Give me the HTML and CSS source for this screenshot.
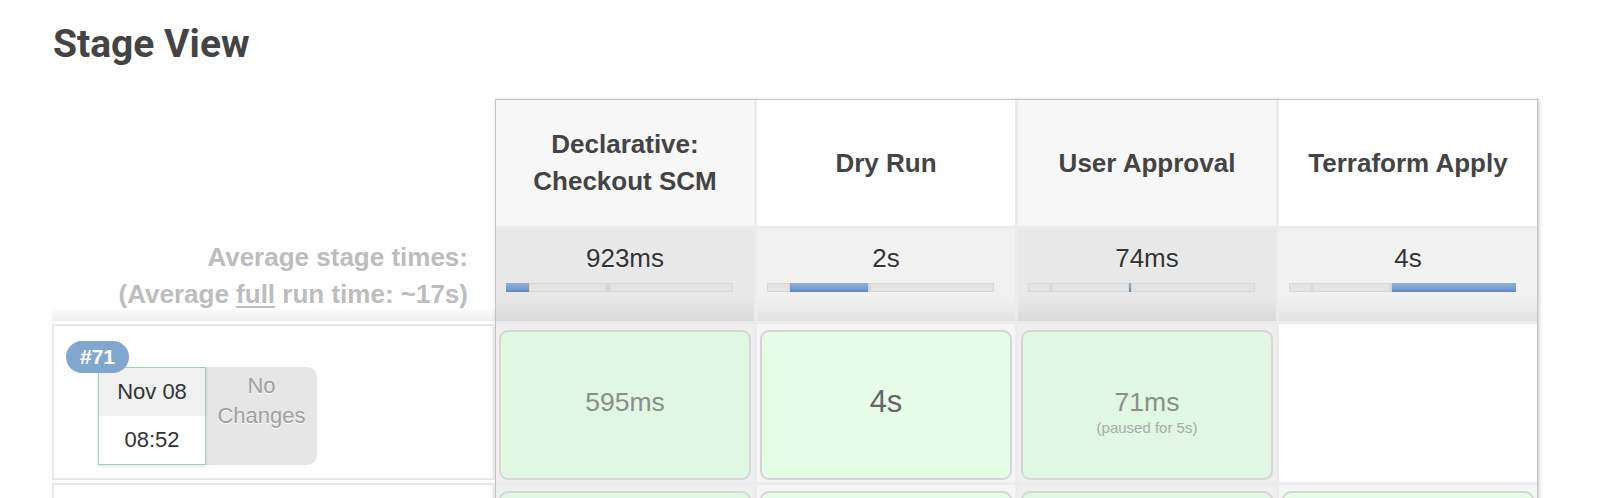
FILE: index.html
```html
<!DOCTYPE html>
<html>
<head>
<meta charset="utf-8">
<link rel="stylesheet" href="styles.css">
</head>
<body>
<div class="page">
  <h2 class="title">Stage View</h2>
  <div class="stage-view">
    <div class="history">
      <div class="history-head"></div>
      <div class="avg-label">Average stage times:<br>(Average <u>full</u> run time: ~17s)</div>
      <div class="build-row">
        <span class="badge">#71</span>
        <div class="build">
          <div class="date">
            <div class="day">Nov 08</div>
            <div class="time">08:52</div>
          </div>
          <div class="changes">No<br>Changes</div>
        </div>
      </div>
      <div class="build-row"></div>
    </div>
    <div class="table-box">
      <div class="grid">
        <div class="head odd"><span>Declarative:<br>Checkout SCM</span></div>
        <div class="head even"><span>Dry Run</span></div>
        <div class="head odd"><span>User Approval</span></div>
        <div class="head even"><span>Terraform Apply</span></div>

        <div class="avg odd">
          <div class="avg-time">923ms</div>
          <div class="bar"><i class="seg on" style="width:10%"></i><i class="seg" style="width:34.6%"></i><i class="seg" style="width:0.5%"></i><i class="seg" style="width:54.9%"></i></div>
        </div>
        <div class="avg even">
          <div class="avg-time">2s</div>
          <div class="bar"><i class="seg" style="width:10%"></i><i class="seg on" style="width:34.6%"></i><i class="seg" style="width:0.5%"></i><i class="seg" style="width:54.9%"></i></div>
        </div>
        <div class="avg odd">
          <div class="avg-time">74ms</div>
          <div class="bar"><i class="seg" style="width:10%"></i><i class="seg" style="width:34.6%"></i><i class="seg on" style="width:0.5%"></i><i class="seg" style="width:54.9%"></i></div>
        </div>
        <div class="avg even">
          <div class="avg-time">4s</div>
          <div class="bar"><i class="seg" style="width:10%"></i><i class="seg" style="width:34.6%"></i><i class="seg" style="width:0.5%"></i><i class="seg on" style="width:54.9%"></i></div>
        </div>

        <div class="cell odd"><div class="box dark"><div class="dur">595ms</div></div></div>
        <div class="cell even"><div class="box light"><div class="dur big">4s</div></div></div>
        <div class="cell odd"><div class="box dark"><div class="dur">71ms</div><div class="paused">(paused for 5s)</div></div></div>
        <div class="cell empty"></div>

        <div class="cell odd"><div class="box dark"></div></div>
        <div class="cell even"><div class="box light"></div></div>
        <div class="cell odd"><div class="box dark"></div></div>
        <div class="cell even"><div class="box light"></div></div>
      </div>
    </div>
  </div>
</div>
</body>
</html>
```

FILE: styles.css
```css
html, body {
  margin: 0;
  padding: 0;
  overflow: hidden;
  background: #fff;
}

body {
  font-family: "Liberation Sans", Arial, sans-serif;
  color: #333;
}

.page {
  padding: 20px 0 0 52px;
}

.title {
  font-family: Roboto, "Liberation Sans", sans-serif;
  font-weight: 700;
  font-size: 39px;
  line-height: 48px;
  color: #444;
  margin: 0 0 31px 1px;
}

.stage-view {
  display: flex;
  align-items: flex-start;
}

/* left history column */
.history {
  width: 443px;
  flex: none;
  display: flex;
  flex-direction: column;
}

.history-head {
  height: 130px;
}

.avg-label {
  height: 92px;
  box-sizing: border-box;
  padding: 10px 27px 0 0;
  text-align: right;
  font-weight: 700;
  font-size: 26px;
  line-height: 37px;
  color: #bdbdbd;
  background: linear-gradient(to bottom, #fff 0, #fff 85%, #ececec 100%);
}

.avg-label u {
  text-decoration-thickness: 2px;
  text-underline-offset: 3px;
}

.build-row {
  position: relative;
  height: 156px;
  box-sizing: border-box;
  border: 2px solid #e8e8e8;
  margin-top: 3px;
}

.badge {
  position: absolute;
  left: 12px;
  top: 15px;
  width: 63px;
  height: 32px;
  border-radius: 16px;
  background: #82a7cf;
  color: #fff;
  font-weight: 700;
  font-size: 21px;
  line-height: 32px;
  text-align: center;
  z-index: 2;
}

.build {
  display: flex;
  margin: 41px 0 0 44px;
}

.date {
  width: 108px;
  height: 98px;
  box-sizing: border-box;
  border: 1px solid #a2d1b2;
  box-shadow: 0 1px 3px rgba(0, 0, 0, 0.14);
  font-size: 22px;
  text-align: center;
  color: #333;
  position: relative;
  z-index: 1;
}

.day {
  height: 48px;
  line-height: 48px;
  background: #f0f0f0;
}

.time {
  height: 48px;
  line-height: 48px;
  background: #fff;
}

.changes {
  width: 111px;
  height: 98px;
  box-sizing: border-box;
  padding-top: 4px;
  background: #e6e6e6;
  border-radius: 0 10px 10px 0;
  font-size: 22px;
  line-height: 30px;
  text-align: center;
  color: #a0a0a0;
  text-shadow: 0 1px 0 #fff;
}

/* stage table */
.table-box {
  width: 1043px;
  flex: none;
  box-sizing: border-box;
  border: 1px solid #c4c4c4;
  box-shadow: 1px 1px 4px rgba(0, 0, 0, 0.22);
  background: #fff;
}

.grid {
  display: grid;
  grid-template-columns: repeat(4, 1fr);
  grid-template-rows: 126px 92px 158px 158px;
  gap: 3px;
  background: #ececec;
}

.head {
  display: flex;
  align-items: center;
  justify-content: center;
  text-align: center;
  font-weight: 700;
  font-size: 26px;
  line-height: 37px;
  color: #444;
}

.head.odd { background: #f7f7f7; }
.head.even { background: #fff; }

.avg {
  padding-top: 14px;
  text-align: center;
}

.avg.odd { background: linear-gradient(to bottom, #e8e8e8 0, #e8e8e8 75%, #dadada 100%); }
.avg.even { background: linear-gradient(to bottom, #f1f1f1 0, #f1f1f1 75%, #e2e2e2 100%); }

.avg-time {
  font-size: 26px;
  line-height: 30px;
  color: #333;
  text-shadow: 0 1px 1px #fff;
}

.bar {
  display: flex;
  height: 9px;
  margin: 10px 21px 0 10px;
  background: #dcdcdc;
}

.seg {
  display: block;
  height: 9px;
  box-sizing: border-box;
  border: 1px solid #d6d6d6;
  background: #e3e3e3;
}

.seg.on {
  background: linear-gradient(to bottom, #8fb0d6 0, #7a9fcd 60%, #5a86c6 100%);
  border: none;
  min-width: 2px;
}

.cell {
  padding: 6px 3px 2px;
}

.cell.odd { background: #efefef; }
.cell.even { background: #f5f5f5; }
.cell.empty { background: #fff; }

.box {
  height: 100%;
  box-sizing: border-box;
  border: 2px solid #d6d6d6;
  border-radius: 9px;
  padding-top: 55px;
  text-align: center;
}

.box.dark { background: #e1f6e3; }
.box.light { background: #e8fde8; }

.dur {
  font-size: 26.5px;
  line-height: 30px;
  color: #8a8f8a;
}

.dur.big {
  font-size: 31px;
  color: #666;
}

.paused {
  margin-top: 2px;
  font-size: 15px;
  line-height: 17px;
  color: #a8aca8;
}
```
